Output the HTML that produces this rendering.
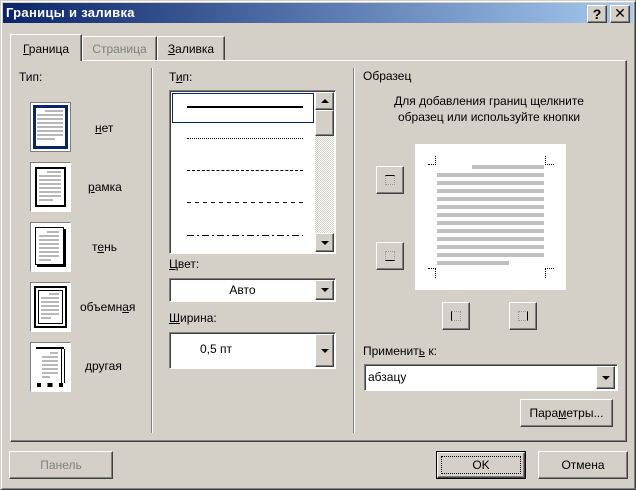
<!DOCTYPE html><html><head><meta charset="utf-8"><style>
*{box-sizing:border-box;margin:0;padding:0}
body{width:636px;height:490px;background:#d4d0c8;font:11px "Liberation Sans","DejaVu Sans",sans-serif;color:#000;position:relative;overflow:hidden}
.a{position:absolute}
.win{left:0;top:0;width:636px;height:490px;border:1px solid;border-color:#d4d0c8 #404040 #404040 #d4d0c8;box-shadow:inset 1px 1px #fff,inset -1px -1px #808080}
.title{left:3px;top:3px;width:630px;height:20px;background:linear-gradient(90deg,#0a246a,#a6caf0);color:#fff;font-weight:bold;font-size:13px;padding:2px 3px;letter-spacing:.3px}
.btn{background:#d4d0c8;border:1px solid;border-color:#fff #404040 #404040 #fff;box-shadow:inset -1px -1px #808080;text-align:center}
.sunk{background:#fff;border:1px solid;border-color:#808080 #fff #fff #808080;box-shadow:inset 1px 1px #404040}
.tab{border:1px solid;border-bottom:none;border-color:#fff #404040 #404040 #fff;box-shadow:inset -1px 0 #808080;text-align:center;padding-top:5px;font-size:12px}
.arr{width:0;height:0;border-left:4px solid transparent;border-right:4px solid transparent;border-top:4px solid #000;position:absolute;left:50%;top:50%;margin:-2px 0 0 -4px}
.lines div{position:absolute;height:4px;background:#c0c0c0}
u{text-decoration:underline}
.ib{width:41px;height:50px;border:1px solid;border-color:#808080 #fff #fff #808080;background:#fff}
.tl{position:absolute;left:6px;width:26px;height:30px;background:repeating-linear-gradient(180deg,#b8b8b8 0 2px,transparent 2px 4px)}
.tl:before{content:"";position:absolute;left:0;top:0;width:8px;height:2px;background:#fff}
.tl:after{content:"";position:absolute;right:0;bottom:0;width:8px;height:2px;background:#fff}
</style></head><body>
<div class="a win"></div>
<div class="a title">Границы и заливка</div>
<div class="a btn" style="left:587px;top:5px;width:20px;height:18px;font-weight:bold;font-size:14px;line-height:16px">?</div>
<div class="a btn" style="left:610px;top:5px;width:20px;height:18px;font-weight:bold;font-size:14px;line-height:15px">✕</div>

<div class="a" style="left:10px;top:60px;width:617px;height:382px;border:1px solid;border-color:#fff #404040 #404040 #fff;box-shadow:inset -1px -1px #808080"></div>
<div class="a tab" style="left:82px;top:36px;width:75px;height:24px;color:#808080">Страница</div>
<div class="a tab" style="left:157px;top:36px;width:68px;height:24px"><u>З</u>аливка</div>
<div class="a tab" style="left:10px;top:34px;width:72px;height:27px;background:#d4d0c8;padding-top:7px"><u>Г</u>раница</div>

<div class="a" style="left:19px;top:70px;font-size:12px">Тип:</div>
<div class="a" style="left:151px;top:68px;width:2px;height:365px;border-left:1px solid #808080;border-right:1px solid #fff"></div>

<div class="a ib" style="left:30px;top:102px;border:1px solid #808080"><div class="a" style="left:2px;top:2px;width:35px;height:44px;border:3px solid #0a246a"></div><div class="tl" style="top:7px"></div></div>
<div class="a" style="left:95px;top:121px;font-size:12px"><u>н</u>ет</div>
<div class="a ib" style="left:30px;top:162px"><div class="a" style="left:4px;top:4px;width:31px;height:40px;border:2px solid #000"></div><div class="tl" style="top:8px;left:8px;width:22px"></div></div>
<div class="a" style="left:88px;top:180px;font-size:12px"><u>р</u>амка</div>
<div class="a ib" style="left:30px;top:222px"><div class="a" style="left:4px;top:4px;width:29px;height:38px;border:1px solid #000;box-shadow:2px 2px #000"></div><div class="tl" style="top:8px;left:8px;width:20px"></div></div>
<div class="a" style="left:92px;top:240px;font-size:12px">т<u>е</u>нь</div>
<div class="a ib" style="left:30px;top:282px"><div class="a" style="left:3px;top:3px;width:33px;height:42px;border:2px solid #000"></div><div class="a" style="left:7px;top:7px;width:25px;height:34px;border:1px solid #000"></div><div class="tl" style="top:10px;left:10px;width:18px;height:26px"></div></div>
<div class="a" style="left:80px;top:300px;font-size:12px">объемн<u>а</u>я</div>
<div class="a ib" style="left:30px;top:342px"><div class="a" style="left:5px;top:4px;width:28px;height:2px;background:#000"></div><div class="a" style="left:30px;top:6px;width:1px;height:34px;background:#000"></div><div class="a" style="left:33px;top:6px;width:1px;height:34px;background:#000"></div><div class="a" style="left:6px;top:40px;width:26px;height:4px;border-left:4px solid #000;border-right:4px solid #000;background:linear-gradient(90deg,#fff 35%,#000 35%,#000 65%,#fff 65%)"></div><div class="tl" style="top:9px;left:11px;width:16px;height:26px"></div></div>
<div class="a" style="left:85px;top:359px;font-size:12px"><u>д</u>ругая</div>

<div class="a" style="left:169px;top:70px;font-size:12px">Т<u>и</u>п:</div>
<div class="a sunk" style="left:169px;top:90px;width:167px;height:164px"></div>
<div class="a" style="left:172px;top:93px;width:142px;height:30px;border:1px solid #0a246a"></div>
<div class="a" style="left:187px;top:106px;width:116px;height:2px;background:#000"></div>
<div class="a" style="left:187px;top:138px;width:116px;height:1px;border-top:1px dotted #000"></div>
<div class="a" style="left:187px;top:170px;width:116px;height:1px;border-top:1px dashed #000"></div>
<div class="a" style="left:187px;top:202px;width:116px;height:1px;background:repeating-linear-gradient(90deg,#000 0 4px,#fff 4px 8px)"></div>
<div class="a" style="left:187px;top:235px;width:116px;height:1px;background:repeating-linear-gradient(90deg,#000 0 7px,#fff 7px 10px,#000 10px 12px,#fff 12px 15px)"></div>
<div class="a" style="left:315px;top:92px;width:19px;height:160px;background:repeating-conic-gradient(#d4d0c8 0 25%,#fff 0 50%) 0 0/2px 2px"></div>
<div class="a btn" style="left:315px;top:92px;width:19px;height:18px"><div class="arr" style="border-top:none;border-bottom:4px solid #000"></div></div>
<div class="a btn" style="left:315px;top:110px;width:19px;height:26px"></div>
<div class="a btn" style="left:315px;top:233px;width:19px;height:19px"><div class="arr"></div></div>

<div class="a" style="left:169px;top:257px;font-size:12px"><u>Ц</u>вет:</div>
<div class="a sunk" style="left:169px;top:278px;width:167px;height:24px;text-align:center;padding:4px 20px 0 0;font-size:12px">Авто</div>
<div class="a btn" style="left:315px;top:280px;width:19px;height:20px"><div class="arr"></div></div>
<div class="a" style="left:169px;top:311px;font-size:12px"><u>Ш</u>ирина:</div>
<div class="a sunk" style="left:169px;top:332px;width:167px;height:37px;padding:9px 0 0 30px;font-size:12px">0,5 пт</div>
<div class="a btn" style="left:315px;top:334px;width:19px;height:33px"><div class="arr"></div></div>

<div class="a" style="left:353px;top:68px;width:2px;height:365px;border-left:1px solid #808080;border-right:1px solid #fff"></div>
<div class="a" style="left:363px;top:69px;font-size:12px">Образец</div>
<div class="a" style="left:363px;top:93px;width:252px;text-align:center;font-size:12px;line-height:16px">Для добавления границ щелкните<br>образец или используйте кнопки</div>
<div class="a" style="left:415px;top:144px;width:151px;height:146px;background:#fff"></div>
<div class="lines">
<div style="left:472px;top:165px;width:72px"></div>
<div style="left:437px;top:173px;width:107px"></div>
<div style="left:437px;top:181px;width:107px"></div>
<div style="left:437px;top:189px;width:107px"></div>
<div style="left:437px;top:197px;width:107px"></div>
<div style="left:437px;top:205px;width:107px"></div>
<div style="left:437px;top:213px;width:107px"></div>
<div style="left:437px;top:221px;width:107px"></div>
<div style="left:437px;top:229px;width:107px"></div>
<div style="left:437px;top:237px;width:107px"></div>
<div style="left:437px;top:245px;width:107px"></div>
<div style="left:437px;top:253px;width:107px"></div>
<div style="left:437px;top:261px;width:72px"></div>
</div>
<div class="a" style="left:428px;top:156px;width:8px;height:9px;border-right:1px dotted #000;border-bottom:1px dotted #000"></div>
<div class="a" style="left:545px;top:156px;width:9px;height:9px;border-left:1px dotted #000;border-bottom:1px dotted #000"></div>
<div class="a" style="left:428px;top:268px;width:8px;height:10px;border-right:1px dotted #000;border-top:1px dotted #000"></div>
<div class="a" style="left:545px;top:268px;width:9px;height:10px;border-left:1px dotted #000;border-top:1px dotted #000"></div>

<div class="a btn" style="left:376px;top:166px;width:28px;height:28px"><div class="a" style="left:8px;top:8px;width:10px;height:10px;border:1px dotted #999;border-top:1px solid #000"></div></div>
<div class="a btn" style="left:376px;top:242px;width:28px;height:28px"><div class="a" style="left:8px;top:8px;width:10px;height:10px;border:1px dotted #999;border-bottom:1px solid #000"></div></div>
<div class="a btn" style="left:442px;top:302px;width:28px;height:28px"><div class="a" style="left:8px;top:8px;width:10px;height:10px;border:1px dotted #999;border-left:1px solid #000"></div></div>
<div class="a btn" style="left:509px;top:302px;width:28px;height:28px"><div class="a" style="left:8px;top:8px;width:10px;height:10px;border:1px dotted #999;border-right:1px solid #000"></div></div>

<div class="a" style="left:363px;top:344px;font-size:12px">Применит<u>ь</u> к:</div>
<div class="a sunk" style="left:364px;top:364px;width:254px;height:27px;padding:5px 0 0 3px;font-size:12px">абзацу</div>
<div class="a btn" style="left:596px;top:366px;width:19px;height:23px"><div class="arr"></div></div>
<div class="a btn" style="left:520px;top:399px;width:93px;height:28px;padding-top:6px;font-size:12px">Пара<u>м</u>етры...</div>

<div class="a btn" style="left:9px;top:451px;width:104px;height:28px;padding-top:6px;color:#808080;font-size:12px">Панель</div>
<div class="a" style="left:436px;top:451px;width:90px;height:28px;border:1px solid #000"></div>
<div class="a btn" style="left:437px;top:452px;width:88px;height:26px;padding-top:5px;font-size:12px"><div class="a" style="left:3px;top:3px;width:80px;height:18px;border:1px dotted #000"></div>OK</div>
<div class="a btn" style="left:538px;top:451px;width:90px;height:28px;padding-top:6px;font-size:12px">Отмена</div>
</body></html>
